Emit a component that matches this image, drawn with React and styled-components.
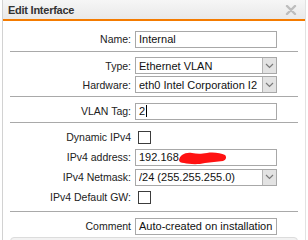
import React from 'react'
import styled, { createGlobalStyle } from 'styled-components'

const Global = createGlobalStyle`
    html, body {
        margin: 0;
        padding: 0;
        background: #ffffff;
    }
    body {
        font-family: 'Liberation Sans', Arial, sans-serif;
    }
`

/* ventana */
const Window = styled.div`
    margin-left: 2px;
    width: 302px;
    height: 240px;
    overflow: hidden;
    border-left: 1px solid #d2d2d2;
    border-right: 1px solid #e2e2e2;
    background: #ffffff;
`

const TitleBar = styled.header`
    height: 19px;
    display: flex;
    align-items: center;
    justify-content: space-between;
    padding: 0 5px 0 5px;
    background: linear-gradient(to bottom, #f6f6f6, #e9e9e9);
    border-bottom: 2px solid #f47b00;
`

const Title = styled.span`
    font-size: 11px;
    font-weight: bold;
    letter-spacing: -0.25px;
    color: #333333;
`

const Close = styled.svg`
    width: 12px;
    height: 10px;
    margin-right: 3px;
`

const Body = styled.div`
    padding: 8px 7px 0 7px;
`

const Group = styled.div`
    margin-top: ${(p) => p.top || 0}px;
`

const Sep = styled.div`
    height: 1px;
    background: #a9a9a9;
    margin-top: ${(p) => p.top || 0}px;
`

const Row = styled.div`
    display: grid;
    grid-template-columns: 121px 142px;
    column-gap: 4px;
    align-items: center;
    height: ${(p) => p.h || 20}px;
`

const Label = styled.label`
    font-size: 10.5px;
    color: #222222;
    text-align: right;
    white-space: nowrap;
`

const Field = styled.div`
    height: 17px;
    box-sizing: border-box;
    border: 1px solid #a8a8a8;
    background: #ffffff;
    display: flex;
    align-items: center;
    padding-left: 3px;
    padding-right: ${(p) => (p.select ? 0 : 3)}px;
    font-size: 11px;
    color: #111111;
    white-space: nowrap;
    overflow: hidden;
`

const SelectText = styled.span`
    flex: 1;
    overflow: hidden;
`

const DropButton = styled.span`
    flex: none;
    width: 14px;
    height: 15px;
    box-sizing: border-box;
    border-left: 1px solid #b4b4b4;
    background: #e3e3e3;
    display: flex;
    align-items: center;
    justify-content: center;
`

const Caret = styled.span`
    display: inline-block;
    width: 1px;
    height: 12px;
    background: #000000;
    margin-left: 1px;
`

const Check = styled.span`
    width: 13px;
    height: 13px;
    box-sizing: border-box;
    border: 1px solid #3c3c3c;
    background: #ffffff;
    margin-left: 3px;
`

const Redacted = styled.svg`
    width: 48px;
    height: 14px;
    flex: none;
    margin-top: 1px;
`

const ButtonBar = styled.div`
    margin: 1px 0 0 0;
    height: 30px;
    background: #f2f2f2;
    border: 1px solid #dcdcdc;
    border-radius: 4px;
`

const Chevron = () => (
    <svg width="9" height="6" viewBox="0 0 9 6">
        <polyline points="1,1 4.5,4.5 8,1" fill="none" stroke="#7a7a7a" strokeWidth="1.2" />
    </svg>
)

const Select = ({ value }) => (
    <Field select>
        <SelectText>{value}</SelectText>
        <DropButton>
            <Chevron />
        </DropButton>
    </Field>
)

export default function App() {
    return (
        <>
            <Global />
            <Window>
                <TitleBar>
                    <Title>Edit Interface</Title>
                    <Close viewBox="0 0 12 10">
                        <path d="M2 1 L10 9 M10 1 L2 9" stroke="#bdbdbd" strokeWidth="2.4" strokeLinecap="round" />
                    </Close>
                </TitleBar>
                <Body>
                    <Group>
                        <Row>
                            <Label>Name:</Label>
                            <Field>Internal</Field>
                        </Row>
                    </Group>
                    <Sep top={2} />
                    <Group top={4}>
                        <Row h={19}>
                            <Label>Type:</Label>
                            <Select value="Ethernet VLAN" />
                        </Row>
                        <Row h={19}>
                            <Label>Hardware:</Label>
                            <Select value="eth0 Intel Corporation I2" />
                        </Row>
                    </Group>
                    <Sep top={2} />
                    <Group top={4}>
                        <Row>
                            <Label>VLAN Tag:</Label>
                            <Field>
                                2<Caret />
                            </Field>
                        </Row>
                    </Group>
                    <Sep top={1} />
                    <Group top={4}>
                        <Row>
                            <Label>Dynamic IPv4</Label>
                            <Check />
                        </Row>
                        <Row>
                            <Label>IPv4 address:</Label>
                            <Field>
                                192.168
                                <Redacted viewBox="0 0 48 14">
                                    <path
                                        d="M0 9 C1 4 6 1 13 2 C18 3 22 3 28 2 C34 1 42 2 46 4 C48 6 47 9 44 10 C38 11 32 11 26 12 C18 14 10 13 5 12 C2 12 0 11 0 9 Z"
                                        fill="#ff1212"
                                    />
                                </Redacted>
                            </Field>
                        </Row>
                        <Row>
                            <Label>IPv4 Netmask:</Label>
                            <Select value="/24 (255.255.255.0)" />
                        </Row>
                        <Row>
                            <Label>IPv4 Default GW:</Label>
                            <Check />
                        </Row>
                    </Group>
                    <Sep top={4} />
                    <Group top={4}>
                        <Row>
                            <Label>Comment</Label>
                            <Field>Auto-created on installation</Field>
                        </Row>
                    </Group>
                    <ButtonBar />
                </Body>
            </Window>
        </>
    )
}
